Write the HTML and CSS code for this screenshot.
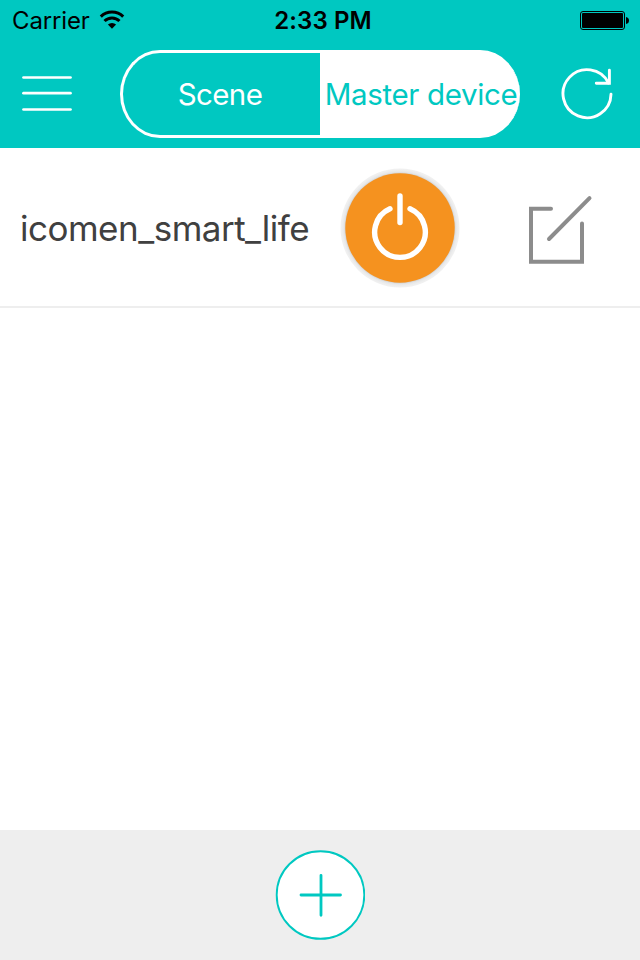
FILE: index.html
```html
<!DOCTYPE html>
<html lang="en">
<head>
    <meta charset="UTF-8">
    <meta name="viewport" content="width=device-width, initial-scale=1.0">
    <title>Master device</title>
    <link rel="stylesheet" href="styles.css">
</head>
<body>
    <div class="app">
        <header class="header">
            <div class="status-bar">
                <div class="carrier">
                    <span class="carrier-name">Carrier</span>
                    <svg class="wifi" width="26" height="20" viewBox="0 0 26 20">
                        <g fill="none" stroke="#000" stroke-width="3">
                            <path d="M1.8 6.6 A16 16 0 0 1 24.2 6.6"/>
                            <path d="M5.5 11 A10.6 10.6 0 0 1 20.5 11"/>
                        </g>
                        <path d="M13 18.8 L8.9 14.6 A5.8 5.8 0 0 1 17.1 14.6 Z"/>
                    </svg>
                </div>
                <span class="time">2:33 PM</span>
                <svg class="battery" width="50" height="20" viewBox="0 0 50 20">
                    <rect x="0.5" y="1.5" width="44" height="18" rx="2.5" fill="none" stroke="#000"/>
                    <rect x="2" y="3" width="41" height="15" rx="1"/>
                    <path d="M46 7 Q49 7.5 49 10.5 Q49 13.5 46 14 Z"/>
                </svg>
            </div>
            <nav class="nav-bar">
                <button class="icon-button menu-button" aria-label="Menu">
                    <svg width="52" height="40" viewBox="0 0 52 40">
                        <g stroke="#fff" stroke-width="2.7" stroke-linecap="round">
                            <path d="M2.5 3.5 H49.5"/>
                            <path d="M2.5 19.2 H49.5"/>
                            <path d="M2.5 35.5 H49.5"/>
                        </g>
                    </svg>
                </button>
                <div class="tabs">
                    <button class="tab">Scene</button>
                    <button class="tab active">Master device</button>
                </div>
                <button class="icon-button refresh-button" aria-label="Refresh">
                    <svg width="56" height="56" viewBox="0 0 56 56">
                        <g fill="none" stroke="#fff" stroke-width="2.9" stroke-linecap="round">
                            <path d="M51 28.2 A24 24 0 1 1 48.5 17"/>
                            <path d="M49.4 4.3 V17.3 H36.3"/>
                        </g>
                    </svg>
                </button>
            </nav>
        </header>

        <main class="device-list">
            <div class="device">
                <span class="device-name">icomen_smart_life</span>
                <button class="icon-button power-button" aria-label="Power">
                    <svg width="120" height="120" viewBox="0 0 120 120">
                        <defs>
                            <radialGradient id="rim" cx="60" cy="60" r="60" gradientUnits="userSpaceOnUse">
                                <stop offset="0.9" stop-color="#c9cacb"/>
                                <stop offset="0.935" stop-color="#e6e7e8"/>
                                <stop offset="0.97" stop-color="#efefef"/>
                                <stop offset="1" stop-color="#f2f2f2"/>
                            </radialGradient>
                        </defs>
                        <circle cx="60" cy="60" r="59.5" fill="url(#rim)"/>
                        <circle cx="60" cy="60" r="54.7" fill="#f5921f"/>
                        <g fill="none" stroke="#fff" stroke-width="5.4" stroke-linecap="round">
                            <path d="M50 40.8 A25.3 25.3 0 1 0 70 40.8"/>
                            <path d="M60 28 V54.5"/>
                        </g>
                    </svg>
                </button>
                <button class="icon-button edit-button" aria-label="Edit">
                    <svg width="70" height="84" viewBox="0 0 70 84">
                        <g fill="none" stroke="#8c8c8c" stroke-width="4" stroke-linecap="round">
                            <path d="M26 23.8 H6 V76.8 H57 V38.5"/>
                            <path d="M24 54 L64.5 13.2"/>
                        </g>
                    </svg>
                </button>
            </div>
        </main>

        <footer class="footer">
            <button class="icon-button add-button" aria-label="Add">
                <svg width="90" height="90" viewBox="0 0 90 90">
                    <circle cx="45.5" cy="45" r="43.8" fill="#fff" stroke="#00c8c1" stroke-width="1.9"/>
                    <path d="M26 45 H65.5 M46 25.3 V65.3" stroke="#00c8c1" stroke-width="2.8" stroke-linecap="round"/>
                </svg>
            </button>
        </footer>
    </div>
</body>
</html>
```
FILE: styles.css
```css
* {
    box-sizing: border-box;
}

body {
    margin: 0;
    font-family: Inter, "Liberation Sans", sans-serif;
    background: #fff;
}

button {
    margin: 0;
    padding: 0;
    border: none;
    background: none;
    font: inherit;
    color: inherit;
    cursor: pointer;
}

svg {
    display: block;
}

.app {
    display: flex;
    flex-direction: column;
    width: 640px;
    height: 960px;
}

.header {
    height: 148px;
    background: #00c8c1;
}

.status-bar {
    display: grid;
    grid-template-columns: 1fr auto 1fr;
    align-items: center;
    height: 40px;
    padding: 0 10px 0 12px;
    font-size: 24px;
    line-height: 38px;
    color: #000;
}

.carrier {
    display: flex;
    align-items: center;
    gap: 9px;
}

.carrier-name {
    padding-top: 2px;
    letter-spacing: -0.15px;
}

.time {
    padding: 2px 0 0 4px;
    font-weight: 600;
    letter-spacing: 0.1px;
}

.battery {
    justify-self: end;
}

.nav-bar {
    display: flex;
    align-items: center;
    height: 108px;
    padding-left: 21px;
}

.icon-button {
    flex: none;
}

.tabs {
    display: flex;
    width: 400px;
    height: 88px;
    margin: 0 40px 0 47px;
}

.tab {
    width: 200px;
    padding-right: 3px;
    border: 3px solid #fff;
    border-right: none;
    border-radius: 40px 0 0 40px / 44px 0 0 44px;
    font-size: 29.5px;
    letter-spacing: -0.6px;
    white-space: nowrap;
    color: #fff;
}

.tab.active {
    padding: 0 0 0 2px;
    border-width: 3px 0;
    border-radius: 0 40px 40px 0 / 0 44px 44px 0;
    letter-spacing: -0.35px;
    background: #fff;
    color: #00c8c1;
}

.device-list {
    flex: 1;
}

.device {
    display: flex;
    align-items: center;
    height: 160px;
    padding-left: 20px;
    border-bottom: 2px solid #eee;
}

.device-name {
    width: 320px;
    padding-top: 2px;
    font-size: 35px;
    letter-spacing: -0.5px;
    color: #404040;
}

.power-button {
    padding-top: 2px;
}

.edit-button {
    margin-left: 65px;
}

.footer {
    display: flex;
    align-items: center;
    justify-content: center;
    height: 130px;
    background: #eee;
}
```
